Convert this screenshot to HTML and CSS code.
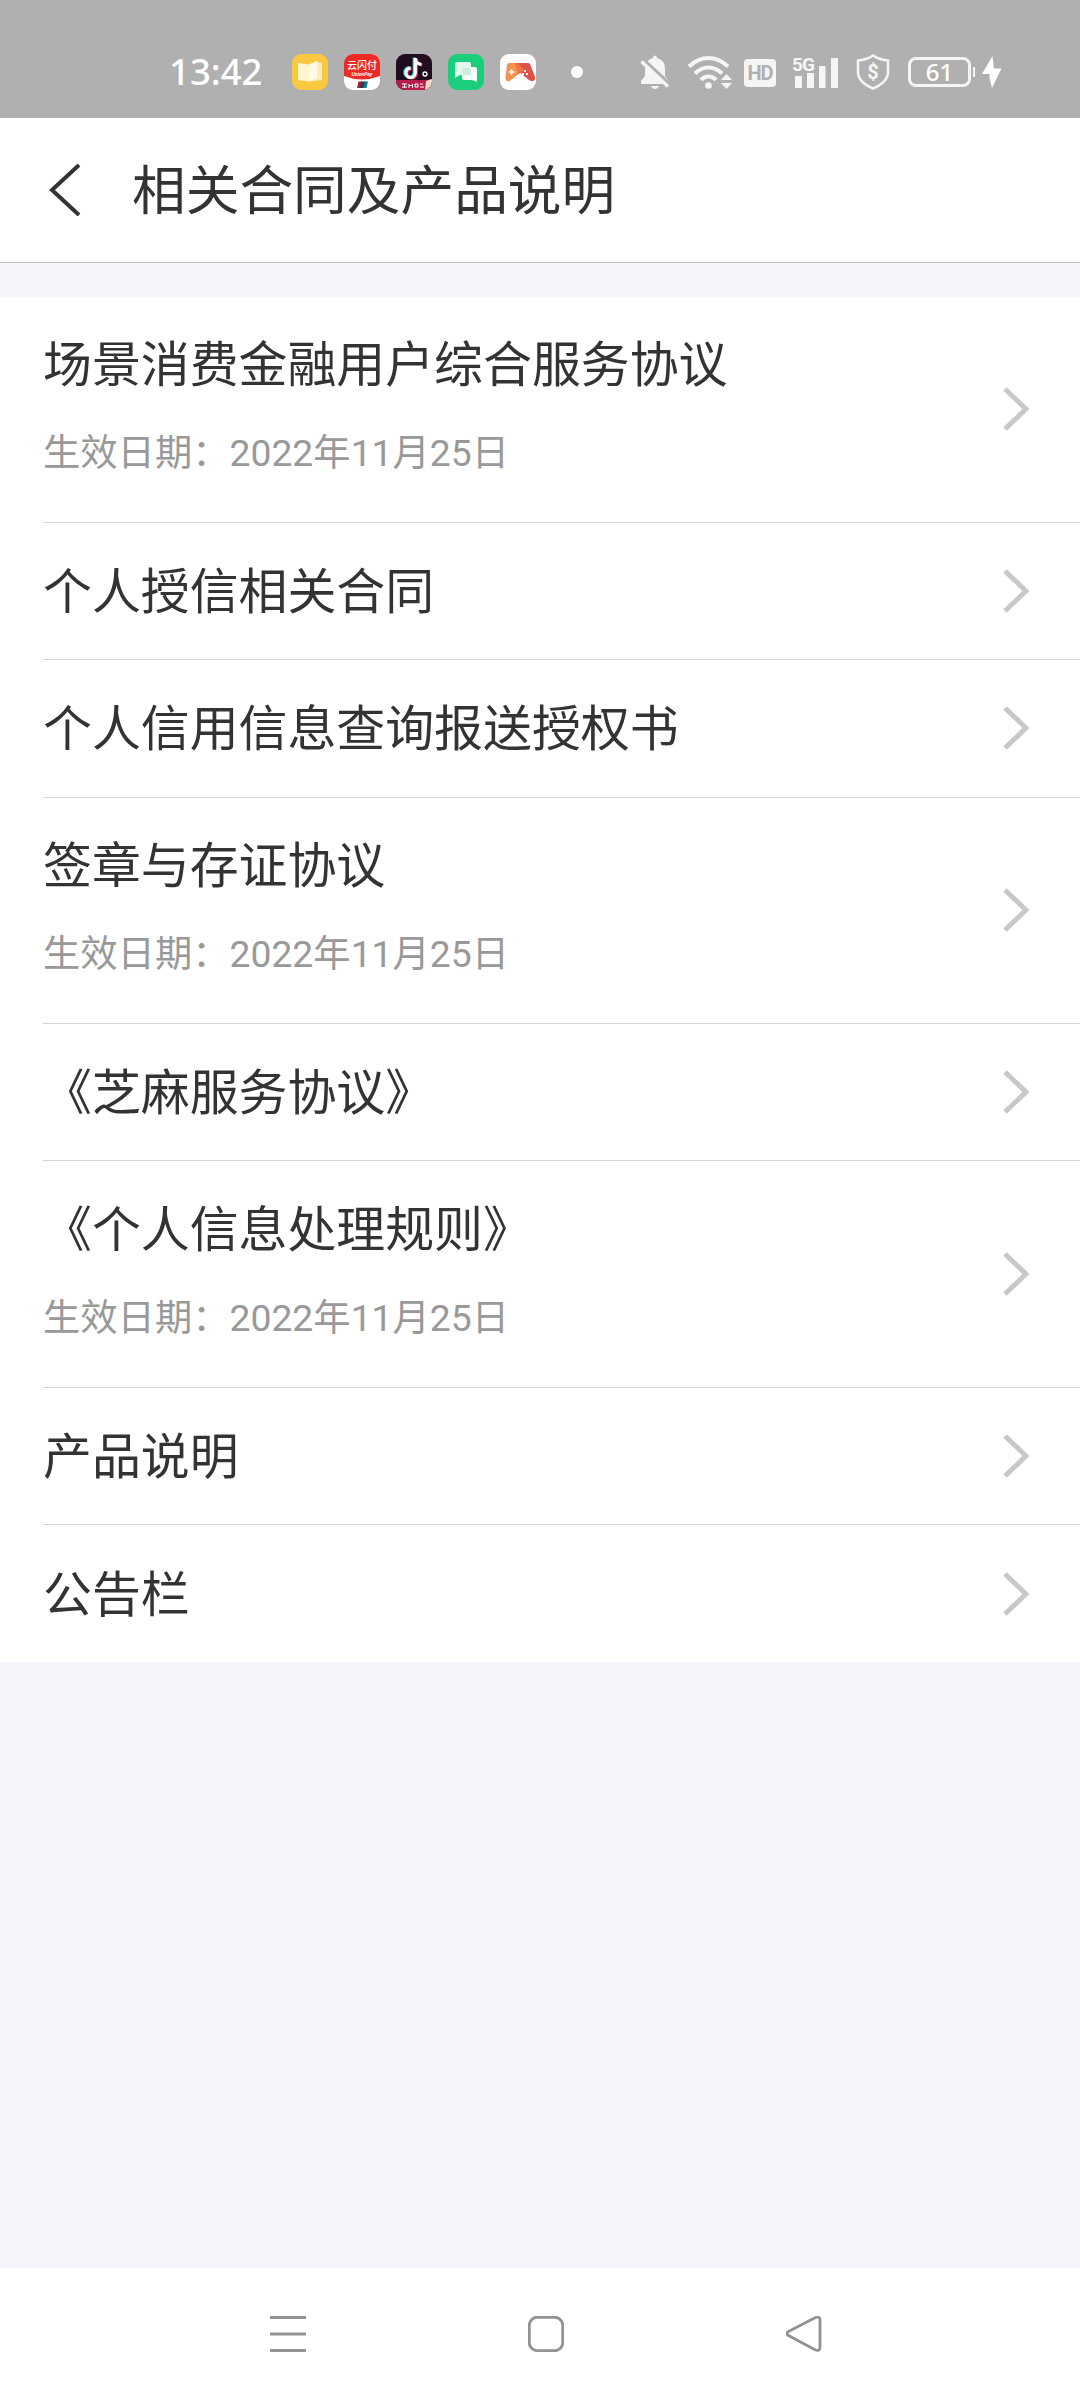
FILE: index.html
```html
<!DOCTYPE html>
<html lang="zh-CN">
<head>
  <meta charset="UTF-8">
  <meta name="viewport" content="width=device-width, initial-scale=1.0">
  <title>相关合同及产品说明</title>
  <link rel="stylesheet" href="styles.css">
</head>
<body>
  <div class="status-bar">
    <span class="time">13:42</span>
    <div class="apps">
      <svg class="app" viewBox="0 0 36 36">
        <rect width="36" height="36" rx="9" fill="#fbc941"/>
        <path d="M6 9l11 1.5v17L6 26z" fill="#fff6cf"/>
        <path d="M17 10.5L25 7v18l-8 2.5z" fill="#fffbe6"/>
        <path d="M25 8l5 1v17l-13 1.5 8-3z" fill="#fdeeb5"/>
      </svg>
      <svg class="app" viewBox="0 0 36 36">
        <rect width="36" height="36" rx="9" fill="#fff"/>
        <path d="M0 22V9a9 9 0 0 1 9-9h18a9 9 0 0 1 9 9v13q-18 7-36 0z" fill="#ee2a26"/>
        <text x="18" y="15" class="pay-name">云闪付</text>
        <text x="18" y="21.500" class="pay-sub">UnionPay</text>
        <path d="M14.500 27.500h4l-1.500 6.500h-4z" fill="#a8202f"/>
        <path d="M17.500 27.500h4L20 34h-4z" fill="#1d3c63"/>
        <path d="M20.500 27.500H24L22.500 34H19z" fill="#14797c"/>
      </svg>
      <svg class="app" viewBox="0 0 36 36">
        <rect width="36" height="36" rx="9" fill="#210d20"/>
        <path d="M0 26h31l5-1v2a9 9 0 0 1-9 9H9a9 9 0 0 1-9-9z" fill="#b51c48"/>
        <path d="M30 27l6-2v2a9 9 0 0 1-7 8.700z" fill="#f6dcc8"/>
        <g fill="none" stroke-width="3.200">
          <path d="M18.300 3.500v14.800a4.700 4.700 0 1 1-4.700-4.700M18.300 4.500q1 5 6 5.500" stroke="#2de2e0"/>
          <path d="M20.300 4.500v14.800a4.700 4.700 0 1 1-4.700-4.700M20.300 5.500q1 5 6 5.500" stroke="#f0325a"/>
          <path d="M19.300 4v14.800a4.700 4.700 0 1 1-4.700-4.700M19.300 5q1 5 6 5.500" stroke="#fff"/>
        </g>
        <circle cx="29" cy="20" r="2" fill="none" stroke="#fff" stroke-width="1.300"/>
        <path d="M6 30h5M6 33h5M8.500 30v4M13 30v4M13 31.500h4M16.500 30v4M19 30h3v3h-3zM24 30h3M24 33h4" fill="none" stroke="#fff" stroke-width="1"/>
      </svg>
      <svg class="app" viewBox="0 0 36 36">
        <rect width="36" height="36" rx="9" fill="#1bce7c"/>
        <path d="M9 8h12q2 0 2 2v11H12l-5 3V10q0-2 2-2z" fill="#e2faee"/>
        <path d="M14 21h9v-8h4q2 0 2 2v13l-5-2h-8q-2 0-2-2z" fill="#f5fffa"/>
        <path d="M14 14h9v7h-9z" fill="#cdeedd"/>
      </svg>
      <svg class="app" viewBox="0 0 36 36">
        <rect width="36" height="36" rx="9" fill="#fff"/>
        <path d="M9 9h9l6 7-13 10q-2 2-4 1-2-1-1.500-4L7 11q.5-2 2-2z" fill="#f69250"/>
        <path d="M15 9h13q2 0 2.500 2L35 23q.5 3-2 4-2 .5-4-1l-11-9z" fill="#e2524c"/>
        <path d="M15 9h3l6 7-6 4.500z" fill="#ef7546"/>
        <path d="M11.500 15v6M8.500 18h6" stroke="#fff" stroke-width="1.700"/>
        <path d="M24 17h2M22 20h2M26 20h2" stroke="#fff" stroke-width="1.800"/>
      </svg>
    </div>
    <span class="dot"></span>
    <svg class="bell" viewBox="0 0 30 34">
      <path d="M13 3q0-2.500 2-2.500T17 3q8 2 8 11v7l4 5v3H1v-3l4-5v-7Q5 5 13 3zM11 31h8q-1 3-4 3t-4-3z" fill="#f5f5f5"/>
      <path d="M1.500 3L31 30" stroke="#b0b0b0" stroke-width="3.500"/>
      <path d="M1.500 6.500L28 31.500" stroke="#f5f5f5" stroke-width="3.200"/>
    </svg>
    <svg class="wifi" viewBox="0 0 45 34">
      <g fill="none" stroke="#f5f5f5" stroke-width="4">
        <path d="M2 11.500Q11 3 21.500 3T41 11.500"/>
        <path d="M8 18.500Q14 12.500 21.500 12.500T35 18.500"/>
        <path d="M14 25Q17 21.500 21.500 21.500T29 25"/>
      </g>
      <circle cx="21.500" cy="30.500" r="3.300" fill="#f5f5f5"/>
      <path d="M34 25l5.500-6 5.500 6zM34 28h11l-5.500 6z" fill="#f5f5f5"/>
    </svg>
    <span class="hd">HD</span>
    <svg class="signal" viewBox="0 0 46 34">
      <text x="0" y="16" class="net">5G</text>
      <path d="M3 21h7v12H3zM15 18h7v15h-7zM27 11h6.500v22H27zM39 3h7v30h-7z" fill="#f5f5f5"/>
    </svg>
    <svg class="shield" viewBox="0 0 34 36">
      <path d="M17 1.500Q24 6 32 6.500V18q0 10-15 16.500Q2 28 2 18V6.500Q10 6 17 1.500z" fill="none" stroke="#f5f5f5" stroke-width="2.500"/>
      <text x="17" y="25" class="dollar">$</text>
    </svg>
    <div class="battery">61</div>
    <span class="nub"></span>
    <svg class="bolt" viewBox="0 0 20 32">
      <path d="M10.500 0L0 18h7.500v4L10 32l9.500-19.500H12z" fill="#fff"/>
    </svg>
  </div>

  <header>
    <svg class="back" viewBox="0 0 32 52">
      <path d="M30 1L3 26l27 25" fill="none" stroke="#333" stroke-width="4"/>
    </svg>
    <h1>相关合同及产品说明</h1>
  </header>

  <main>
    <ul class="list">
      <li class="item tall">
        <div>
          <p class="name">场景消费金融用户综合服务协议</p>
          <p class="date">生效日期：2022年11月25日</p>
        </div>
        <svg class="arrow" viewBox="0 0 26 44"><path d="M2 2l21 20L2 42"/></svg>
      </li>
      <li class="item">
        <p class="name">个人授信相关合同</p>
        <svg class="arrow" viewBox="0 0 26 44"><path d="M2 2l21 20L2 42"/></svg>
      </li>
      <li class="item">
        <p class="name">个人信用信息查询报送授权书</p>
        <svg class="arrow" viewBox="0 0 26 44"><path d="M2 2l21 20L2 42"/></svg>
      </li>
      <li class="item tall">
        <div>
          <p class="name">签章与存证协议</p>
          <p class="date">生效日期：2022年11月25日</p>
        </div>
        <svg class="arrow" viewBox="0 0 26 44"><path d="M2 2l21 20L2 42"/></svg>
      </li>
      <li class="item">
        <p class="name">《芝麻服务协议》</p>
        <svg class="arrow" viewBox="0 0 26 44"><path d="M2 2l21 20L2 42"/></svg>
      </li>
      <li class="item tall">
        <div>
          <p class="name">《个人信息处理规则》</p>
          <p class="date">生效日期：2022年11月25日</p>
        </div>
        <svg class="arrow" viewBox="0 0 26 44"><path d="M2 2l21 20L2 42"/></svg>
      </li>
      <li class="item">
        <p class="name">产品说明</p>
        <svg class="arrow" viewBox="0 0 26 44"><path d="M2 2l21 20L2 42"/></svg>
      </li>
      <li class="item">
        <p class="name">公告栏</p>
        <svg class="arrow" viewBox="0 0 26 44"><path d="M2 2l21 20L2 42"/></svg>
      </li>
    </ul>
  </main>

  <nav>
    <svg viewBox="0 0 36 36"><path d="M0 1.500h36M0 18h36M0 34.500h36"/></svg>
    <svg viewBox="0 0 36 36"><rect x="1.300" y="1.300" width="33.400" height="33.400" rx="8"/></svg>
    <svg viewBox="0 0 36 36"><path d="M2.500 15.500L29.500 1.500Q34 0 34 4v27q0 4.500-4.500 3L2.500 19.500q-3-2 0-4z"/></svg>
  </nav>
</body>
</html>
```
FILE: styles.css
```css
* {
  box-sizing: border-box;
}

body {
  margin: 0;
  height: 2400px;
  display: flex;
  flex-direction: column;
  font-family: Roboto, "Noto Sans CJK SC", sans-serif;
  background-color: #f4f4fa;
  color: #333;
}

h1, p, ul {
  margin: 0;
  padding: 0;
}

svg {
  display: block;
  flex-shrink: 0;
}

/* status bar */
.status-bar {
  height: 118px;
  padding: 26px 0 0 169px;
  display: flex;
  align-items: center;
  background-color: #b0b0b0;
  color: #fff;
}

.time {
  width: 123px;
  padding-bottom: 2px;
  font: 500 36.500px "Noto Sans", sans-serif;
}

.apps {
  display: flex;
  gap: 16px;
}

.app {
  width: 36px;
  height: 36px;
}

.pay-name {
  font: 500 10px "Noto Sans CJK SC", sans-serif;
  fill: #fff;
  text-anchor: middle;
}

.pay-sub {
  font: italic bold 4.5px "Liberation Sans", sans-serif;
  fill: #fff;
  text-anchor: middle;
}

.dot {
  width: 12px;
  height: 12px;
  margin: 0 57px 0 35px;
  border-radius: 50%;
  background-color: #fff;
}

.bell {
  width: 30px;
  height: 34px;
}

.wifi {
  width: 45px;
  height: 34px;
  margin-left: 17px;
}

.hd {
  width: 32px;
  height: 28px;
  margin: 2px 16px 0 12px;
  border-radius: 4px;
  background-color: #f5f5f5;
  color: #b0b0b0;
  font: bold 20px/29px Roboto, sans-serif;
  letter-spacing: -1px;
  text-align: center;
}

.signal {
  width: 46px;
  height: 34px;
  overflow: visible;
}

.net {
  font: bold 19px Roboto, sans-serif;
  letter-spacing: -1px;
  fill: #f5f5f5;
}

.shield {
  width: 34px;
  height: 36px;
  margin-left: 18px;
}

.dollar {
  font: bold 20px Roboto, sans-serif;
  fill: #f5f5f5;
  text-anchor: middle;
}

.battery {
  width: 63px;
  height: 30px;
  margin-left: 18px;
  border: 3px solid #f5f5f5;
  border-radius: 8px;
  font: 500 24px/23px "Noto Sans", sans-serif;
  text-align: center;
}

.nub {
  width: 2px;
  height: 10px;
  margin: 0 7px 0 2px;
  background-color: #f5f5f5;
}

.bolt {
  width: 20px;
  height: 32px;
}

/* title */
header {
  height: 145px;
  padding-left: 49px;
  display: flex;
  align-items: center;
  background-color: #fff;
  border-bottom: 1px solid #c4c4c8;
}

.back {
  width: 32px;
  height: 52px;
  margin-bottom: 1px;
}

h1 {
  margin-left: 51px;
  padding-top: 3px;
  font-size: 53.700px;
  font-weight: 400;
  line-height: 80px;
}

/* agreements */
main {
  flex: 1;
  padding-top: 33.600px;
}

.list {
  list-style: none;
  padding-left: 43px;
  background-color: #fff;
}

.item {
  height: 137.200px;
  padding-right: 51px;
  display: flex;
  justify-content: space-between;
  align-items: center;
  border-bottom: 1px solid #d5d5d7;
}

.item:last-child {
  border-bottom: none;
}

.tall {
  height: 226.600px;
}

.name {
  padding-top: 4px;
  font-size: 48.900px;
  line-height: 70px;
}

.tall .name {
  padding-top: 0;
}

.date {
  margin: 22px 0 4px;
  font-size: 37.300px;
  line-height: 60px;
  color: #999;
}

.arrow {
  width: 26px;
  height: 44px;
}

.arrow path {
  fill: none;
  stroke: #c7c7cc;
  stroke-width: 5;
}

/* system navigation */
nav {
  height: 132px;
  padding: 0 258px 0 270px;
  display: flex;
  justify-content: space-between;
  align-items: center;
  background-color: #fff;
}

nav svg {
  width: 36px;
  height: 36px;
  fill: none;
  stroke: #929292;
  stroke-width: 2.800;
}
```
